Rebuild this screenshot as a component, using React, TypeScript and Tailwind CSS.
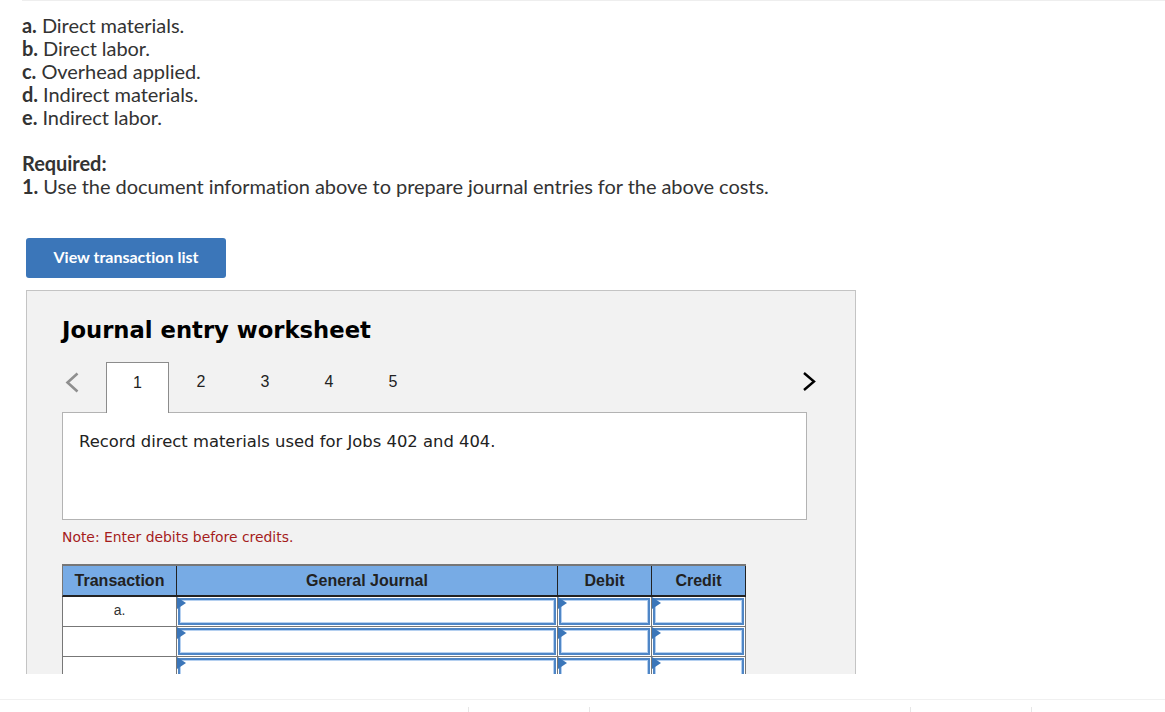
const items = [
  ["a.", "Direct materials."],
  ["b.", "Direct labor."],
  ["c.", "Overhead applied."],
  ["d.", "Indirect materials."],
  ["e.", "Indirect labor."],
];

// Blue corner flag the entry cells carry
const Flag = () => (
  <svg width="9" height="12" viewBox="0 0 9 12" className="absolute left-0 top-0">
    <path d="M0 0L9 6L0 12Z" fill="#3b76b9" />
  </svg>
);

const EntryCell = ({ width }: { width: string }) => (
  <div className={`relative h-[30px] shrink-0 border-r border-b border-[#777] bg-white p-px ${width}`}>
    <div className="h-[27px] border-2 border-[#4f86c6] bg-white shadow-[inset_0_0_0_1px_#b5d0f0]" />
    <Flag />
  </div>
);

const Row = ({ label }: { label?: string }) => (
  <div className="flex">
    <div className="flex h-[30px] w-[115px] shrink-0 items-center justify-center border-x border-b border-[#777] bg-white pb-0.5 text-[14px] text-[#333]">
      {label}
    </div>
    <EntryCell width="w-[381px]" />
    <EntryCell width="w-[94px]" />
    <EntryCell width="w-[94px]" />
  </div>
);

const HeaderCell = ({ label, width }: { label: string; width: string }) => (
  <div className={`flex h-[31px] shrink-0 items-center justify-center border-r border-b-2 border-[#222] bg-[#77abe5] text-[16px] font-bold text-[#222] ${width}`}>
    {label}
  </div>
);

export default function App() {
  return (
    <div className="h-[712px] w-[1165px] overflow-hidden bg-white">
      <div className="h-[674px] overflow-hidden">
        <div className="ml-[22px] border-t border-[#eeeeee] pt-[13px] text-[20px] leading-[23px] tracking-[-0.05px] text-[#333] [font-variant-ligatures:none] font-['Lato',sans-serif]">
          {items.map(([key, text]) => (
            <div key={key}>
              <b>{key}</b> {text}
            </div>
          ))}
          <div className="mt-[23px] font-bold">Required:</div>
          <div>
            <b>1.</b> Use the document information above to prepare journal entries for the above costs.
          </div>
        </div>

        <button className="ml-[26px] mt-[40px] flex h-[40px] w-[200px] items-center justify-center rounded-[3px] bg-[#3b76b9] pb-0.5 text-[16px] font-bold text-white [font-variant-ligatures:none] font-['Lato',sans-serif]">
          View transaction list
        </button>

        <div className="ml-[26px] mt-3 h-[500px] w-[830px] border border-[#c4c4c4] bg-[#f2f2f2] pl-[35px] pt-[23px] font-['DejaVu_Sans',sans-serif]">
          <h2 className="text-[22.7px] font-bold leading-[32px] text-black">Journal entry worksheet</h2>

          <div className="mt-[16px] flex h-[51px] w-[745px] items-center font-['Liberation_Sans',sans-serif] text-[16px] text-[#222]">
            <svg width="14" height="21" viewBox="0 0 14 21" fill="none" className="ml-[3px] mb-[11px] shrink-0">
              <path d="M12.5 1.5L2.5 10.5L12.5 19.5" stroke="#8f8f8f" strokeWidth="2.6" />
            </svg>
            <div className="relative z-10 ml-[27px] flex h-[51px] w-[63px] shrink-0 items-center justify-center border border-b-0 border-[#8c8c8c] bg-white pb-[11px]">
              1
            </div>
            {["2", "3", "4", "5"].map((n) => (
              <div key={n} className="flex h-[51px] w-[64px] shrink-0 items-center justify-center pb-[11px]">
                {n}
              </div>
            ))}
            <svg width="14" height="19" viewBox="0 0 14 19" fill="none" className="ml-auto mb-[12px] mr-[-9px] shrink-0">
              <path d="M2 1L12 9.5L2 18" stroke="#000" strokeWidth="2.4" />
            </svg>
          </div>

          <div className="-mt-px h-[108px] w-[745px] border border-[#b3b3b3] bg-white pl-[16px] pt-[18px] text-[16.4px] leading-[22px] text-[#222]">
            Record direct materials used for Jobs 402 and 404.
          </div>

          <p className="mt-[7px] text-[13.9px] leading-[20px] text-[#a51c1c]">Note: Enter debits before credits.</p>

          <div className="mt-[17px] w-[684px] font-['Liberation_Sans',sans-serif]">
            <div className="flex border-t-2 border-[#777]">
              <div className="flex h-[31px] w-[115px] shrink-0 items-center justify-center border-x border-b-2 border-[#777] border-r-[#222] border-b-[#222] bg-[#77abe5] text-[16px] font-bold text-[#222]">
                Transaction
              </div>
              <HeaderCell label="General Journal" width="w-[381px]" />
              <HeaderCell label="Debit" width="w-[94px]" />
              <HeaderCell label="Credit" width="w-[94px]" />
            </div>
            <Row label="a." />
            <Row />
            <Row />
          </div>
        </div>
      </div>

      <div className="mt-[25px] border-t border-[#f0f0f0]" />
      <div className="mt-[7px] flex h-[5px]">
        <div className="ml-[468px] h-full w-px bg-[#e6e6e6]" />
        <div className="ml-[120px] h-full w-px bg-[#e6e6e6]" />
        <div className="ml-[320px] h-full w-px bg-[#e6e6e6]" />
        <div className="ml-[120px] h-full w-px bg-[#e6e6e6]" />
      </div>
    </div>
  );
}
